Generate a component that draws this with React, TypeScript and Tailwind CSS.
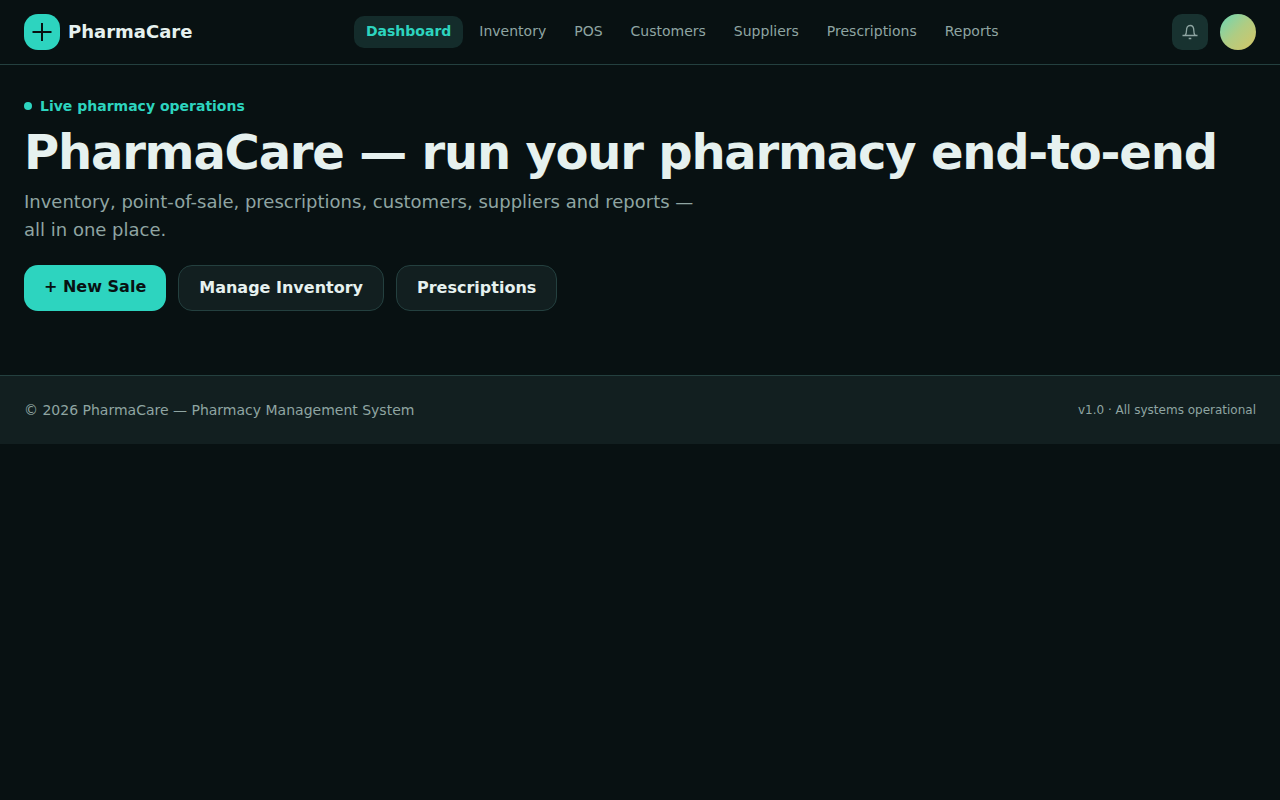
const links = ['Dashboard', 'Inventory', 'POS', 'Customers', 'Suppliers', 'Prescriptions', 'Reports'];

export default function App() {
  return (
    <div className="min-h-screen bg-[#081112] font-['DejaVu_Sans',sans-serif] text-[#e6f1ef]">
      <header className="border-b border-[#24403f]">
        <div className="flex h-16 items-center justify-between px-6">
          <a href="#" className="flex items-center gap-2">
            <span className="flex size-9 items-center justify-center rounded-[14px] bg-[#2dd4bf] text-[#081112]">
              <svg className="size-5" viewBox="0 0 20 20" fill="none" stroke="currentColor" strokeWidth="2">
                <path d="M10 1v18M.5 10h19" />
              </svg>
            </span>
            <span className="text-lg leading-6 font-bold">PharmaCare</span>
          </a>
          <nav className="flex items-center gap-1 text-sm">
            {links.map((link, i) => (
              <a
                key={link}
                href="#"
                className={i === 0 ? 'rounded-[10px] bg-[#142c2b] px-3 pt-[5px] pb-[7px] font-bold text-[#2dd4bf]' : 'rounded-[10px] px-3 pt-[5px] pb-[7px] text-[#8fa5a2]'}
              >
                {link}
              </a>
            ))}
          </nav>
          <div className="flex items-center gap-3">
            <button aria-label="Notifications" className="flex size-9 items-center justify-center rounded-[10px] bg-[#183230] text-[#8fa5a2]">
              <svg className="size-4" viewBox="0 0 16 16" fill="none" stroke="currentColor" strokeWidth="1.3">
                <path d="M.5 11.5h15M3 11.5c1-1 1.500-2.500 1.500-5C4.500 3.500 5.500 1.500 8.200 1.500s3.600 2 3.600 5c0 2.500.4 4 1.400 5M6.700 14.500h2.600" />
              </svg>
            </button>
            <span className="size-9 rounded-full bg-linear-to-br from-[#5fd6b4] via-[#b0cc82] via-50% to-[#d4c464]" />
          </div>
        </div>
      </header>
      <main className="px-6 pt-[31px] pb-16">
        <p className="flex items-center gap-2 text-sm font-bold text-[#2dd4bf]">
          <span className="size-2 rounded-full bg-[#2dd4bf]" />
          Live pharmacy operations
        </p>
        <h1 className="mt-3 text-5xl font-bold tracking-tight">PharmaCare — run your pharmacy end-to-end</h1>
        <p className="mt-3 max-w-2xl text-lg text-[#8fa5a2]">
          Inventory, point-of-sale, prescriptions, customers, suppliers and reports — all in one place.
        </p>
        <div className="mt-[21px] flex gap-3 font-bold">
          <a href="#" className="rounded-[14px] bg-[#2dd4bf] px-5 py-2.5 text-[#081112]">+ New Sale</a>
          <a href="#" className="rounded-[14px] border border-[#24403f] bg-[#121f20] px-5 py-2.5">Manage Inventory</a>
          <a href="#" className="rounded-[14px] border border-[#24403f] bg-[#121f20] px-5 py-2.5">Prescriptions</a>
        </div>
      </main>
      <footer className="flex items-center justify-between border-t border-[#24403f] bg-[#121f20] p-6 text-[#8fa5a2]">
        <p className="text-sm">© 2026 PharmaCare — Pharmacy Management System</p>
        <p className="text-xs">v1.0 · All systems operational</p>
      </footer>
    </div>
  );
}
